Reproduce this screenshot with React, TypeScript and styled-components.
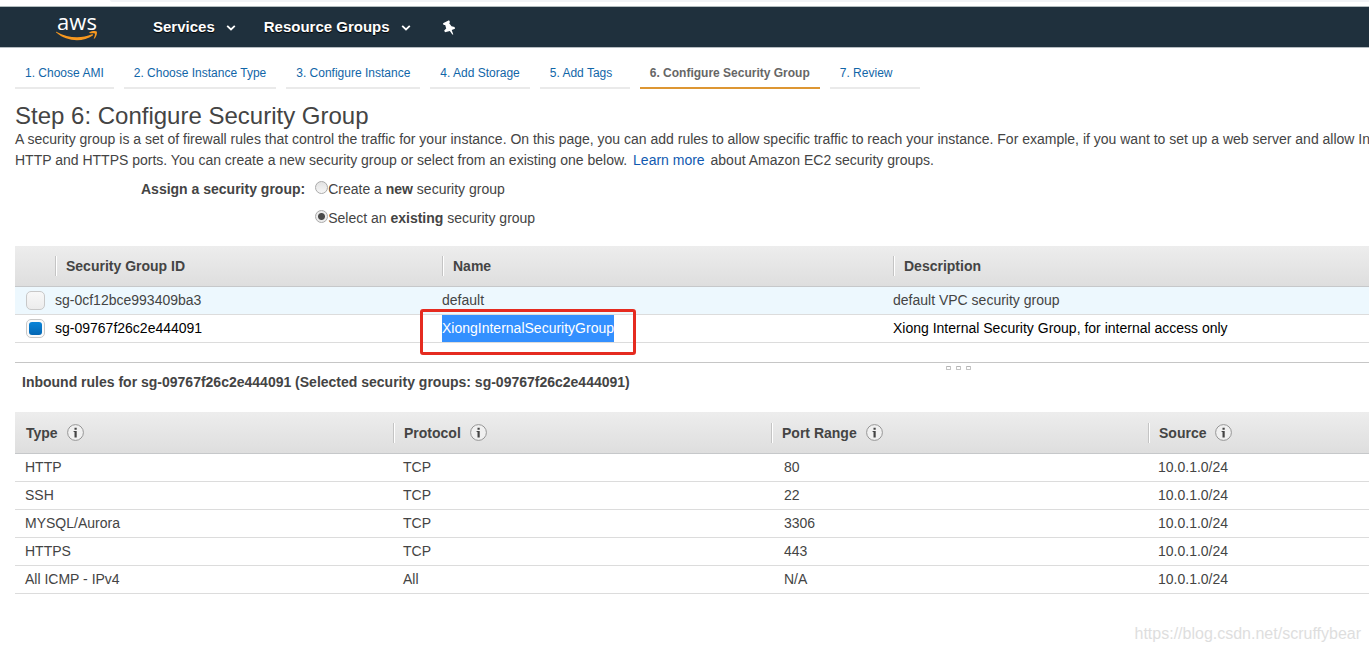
import React from "react";
import styled, { createGlobalStyle } from "styled-components";

const GlobalStyle = createGlobalStyle`
  *, *::before, *::after { box-sizing: border-box; }
  body {
    margin: 0;
    background: #fff;
    color: #444;
    font: 14px/20px "Liberation Sans", Arial, sans-serif;
  }
`;

const Page = styled.div`
  overflow: hidden;
`;

const BrowserEdge = styled.div`
  height: 7px;
  padding-left: 110px;
  border-bottom: 1px solid #b3bdbf;
  &::before {
    content: "";
    display: block;
    height: 2px;
    border-radius: 0 0 0 4px;
    background: #f1f3f6;
  }
`;

const NavBar = styled.header`
  display: flex;
  align-items: center;
  height: 41px;
  padding-left: 56px;
  background: #1f303d;
  border-bottom: 1px solid #b5bcc1;
`;

const Logo = styled.a`
  display: flex;
  flex-direction: column;
  align-items: center;
  width: 42px;
  margin-right: 55px;
  color: #fff;
  text-decoration: none;
  font: 22px/16px "Open Sans", "Noto Sans", sans-serif;
  svg { display: block; }
`;

const LogoWord = styled.span`
  height: 18px;
`;

const NavItem = styled.button`
  display: flex;
  align-items: center;
  gap: 11px;
  margin: 0 28px 0 0;
  padding: 0;
  border: 0;
  background: none;
  color: #fff;
  font: bold 15px/20px "Liberation Sans", Arial, sans-serif;
  text-shadow: 0 1px 1px #000;
  svg { display: block; }
`;

const Steps = styled.nav`
  display: flex;
  gap: 10px;
  padding: 16px 15px 0;
`;

const Step = styled.a<{ $active?: boolean }>`
  min-width: 90px;
  padding: 0 10px 5px;
  border-bottom: 2px solid ${(p) => (p.$active ? "#dd9632" : "#eaeaea")};
  color: ${(p) => (p.$active ? "#666" : "#1166a8")};
  font-size: 12px;
  line-height: 18px;
  font-weight: ${(p) => (p.$active ? "bold" : "normal")};
  text-decoration: none;
  white-space: nowrap;
`;

const Content = styled.main`
  padding-left: 15px;
`;

const Title = styled.h1`
  margin: 14px 0 0;
  font-size: 24px;
  line-height: 26px;
  font-weight: normal;
`;

const Intro = styled.p`
  margin: 0;
  line-height: 21px;
  white-space: nowrap;
`;

const TextLink = styled.a`
  margin: 0 2px;
  color: #1159b0;
  text-decoration: none;
`;

const Assign = styled.div`
  display: flex;
  gap: 10px;
  margin: 8px 0 18px;
  padding-left: 126px;
`;

const AssignLabel = styled.span`
  font-weight: bold;
`;

const Options = styled.div`
  display: flex;
  flex-direction: column;
  gap: 9px;
`;

const Option = styled.label`
  display: flex;
  white-space: pre;
`;

const Radio = styled.input`
  appearance: none;
  width: 13px;
  height: 13px;
  margin: 2px 0 0;
  border: 1px solid #aaa;
  border-radius: 50%;
  background: linear-gradient(#e2e2e2, #f6f6f6);
  &:checked {
    background: radial-gradient(circle, #4a4a4a 0 3px, #ececec 4px);
  }
`;

const Table = styled.table`
  width: 100%;
  table-layout: fixed;
  border-collapse: separate;
  border-spacing: 0;
`;

const Col = styled.col<{ $w?: number }>`
  width: ${(p) => (p.$w ? `${p.$w}px` : "auto")};
`;

const HeadCell = styled.th<{ $tall?: boolean }>`
  height: ${(p) => (p.$tall ? 42 : 41)}px;
  padding: 0;
  text-align: left;
  background: linear-gradient(#ededed, #dedede);
  border-bottom: 1px solid #c6c8ca;
`;

const HeadLabel = styled.span<{ $divided?: boolean }>`
  display: flex;
  align-items: center;
  gap: 9px;
  height: 20px;
  padding-left: 11px;
  box-shadow: ${(p) => (p.$divided ? "inset 1px 0 #c4c4c4, inset 2px 0 #fff" : "none")};
`;

const Row = styled.tr<{ $tint?: boolean; $strong?: boolean }>`
  background: ${(p) => (p.$tint ? "#edf8fe" : "#fff")};
  color: ${(p) => (p.$strong ? "#000" : "#444")};
`;

const Cell = styled.td<{ $pad?: number }>`
  position: relative;
  height: 28px;
  padding: 0 0 0 ${(p) => p.$pad ?? 0}px;
  border-bottom: 1px solid #dcdcdc;
  line-height: 27px;
`;

const CheckBox = styled.input`
  appearance: none;
  display: block;
  width: 19px;
  height: 19px;
  margin: 0 0 0 11px;
  border: 1px solid #c8c8c8;
  border-radius: 5px;
  background: linear-gradient(#f8f8f8, #ececec);
  &:checked {
    display: grid;
    place-items: center;
    background: #fafafa;
  }
  &:checked::before {
    content: "";
    width: 13px;
    height: 13px;
    border-radius: 3px;
    background: linear-gradient(#0a84d8, #0467b4);
  }
`;

const Selected = styled.span`
  display: inline-block;
  background: #3390ff;
  color: #fff;
`;

const RedFrame = styled.span`
  position: absolute;
  top: -6px;
  left: -22px;
  z-index: 1;
  width: 216px;
  height: 46px;
  border: 3px solid #e52b20;
  border-radius: 3px;
`;

const Splitter = styled.div`
  display: flex;
  justify-content: center;
  gap: 5px;
  margin-top: 19px;
  padding: 3px 0 0 532px;
  border-top: 1px solid #c6c6c6;
`;

const Grip = styled.i`
  width: 5px;
  height: 4px;
  border: 1px solid #c4c4c4;
  border-top-color: #b4b4b4;
  border-radius: 1px;
`;

const RulesTitle = styled.h2`
  margin: 2px 0 20px;
  padding-left: 7px;
  font-size: 14px;
  line-height: 20px;
`;

const Watermark = styled.footer`
  padding: 30px 8px 8px;
  color: #dedede;
  font-size: 16px;
  line-height: 20px;
  text-align: right;
`;

const Chevron = () => (
  <svg width="10" height="7" viewBox="0 0 10 7" aria-hidden="true">
    <path d="M1.200 1.800 5 5.500l3.800-3.700" fill="none" stroke="#fff" strokeWidth="1.800" />
  </svg>
);

const Info = () => (
  <svg width="17" height="17" viewBox="0 0 17 17" aria-hidden="true">
    <circle cx="8.500" cy="8.500" r="7.900" fill="#f0f0f0" stroke="#8c8c8c" strokeWidth=".9" />
    <path d="M7.500 3.800h2.200v1.900H7.500zM6.600 6.900h3.100v6.500H7.500V8h-.9z" fill="#444" />
  </svg>
);

const steps = [
  "1. Choose AMI",
  "2. Choose Instance Type",
  "3. Configure Instance",
  "4. Add Storage",
  "5. Add Tags",
  "6. Configure Security Group",
  "7. Review",
];

const rules = [
  ["HTTP", "TCP", "80", "10.0.1.0/24"],
  ["SSH", "TCP", "22", "10.0.1.0/24"],
  ["MYSQL/Aurora", "TCP", "3306", "10.0.1.0/24"],
  ["HTTPS", "TCP", "443", "10.0.1.0/24"],
  ["All ICMP - IPv4", "All", "N/A", "10.0.1.0/24"],
];

const PORT_COLUMN = 2;

export default function App() {
  return (
    <Page>
      <GlobalStyle />
      <BrowserEdge />
      <NavBar>
        <Logo href="#">
          <LogoWord>aws</LogoWord>
          <svg width="42" height="11" viewBox="0 0 42 11" aria-hidden="true">
            <path d="M.4.800C12 7.300 25 8 36 3.300c1-.4 1.700.5.8 1.200C27 11.500 11 11 .2 1.600c-.4-.5-.2-1 .2-.8z" fill="#f7981f" />
            <path d="M33.500 1.300c2.300-1.500 6.500-1.500 7.300-.6.600 1-.3 5.200-2.500 7-.4.300-.7.100-.5-.3.700-1.800 1.500-4.200 1-4.800s-3.300-.4-4.900-.400c-.7 0-.8-.5-.4-.9z" fill="#f7981f" />
          </svg>
        </Logo>
        <NavItem type="button">Services <Chevron /></NavItem>
        <NavItem type="button">Resource Groups <Chevron /></NavItem>
        <NavItem type="button" aria-label="Pin shortcuts">
          <svg width="17" height="15" viewBox="-3 0 17 15" aria-hidden="true">
            <path d="M1 3.200 7 .3l1 1.700-.8 1.300 2.300 3L12.600 7l.4 1.700-3.300 1.400L11.300 14.500h-1L7.900 11 3 12.200l-.8-1.700 2-2.100L3.200 5 1.600 4.900z" fill="#fff" />
          </svg>
        </NavItem>
      </NavBar>
      <Steps aria-label="Wizard steps">
        {steps.map((s, i) => (
          <Step key={s} href="#" $active={i === 5}>{s}</Step>
        ))}
      </Steps>
      <Content>
        <Title>Step 6: Configure Security Group</Title>
        <Intro>
          A security group is a set of firewall rules that control the traffic for your instance. On this page, you can add rules to allow specific traffic to reach your instance. For example, if you want to set up a web server and allow Internet
          <br />
          HTTP and HTTPS ports. You can create a new security group or select from an existing one below. <TextLink href="#">Learn more</TextLink> about Amazon EC2 security groups.
        </Intro>
        <Assign role="radiogroup" aria-labelledby="assign">
          <AssignLabel id="assign">Assign a security group:</AssignLabel>
          <Options>
            <Option><Radio type="radio" name="group" />Create a <b>new</b> security group</Option>
            <Option><Radio type="radio" name="group" defaultChecked />Select an <b>existing</b> security group</Option>
          </Options>
        </Assign>
        <Table>
          <colgroup><Col $w={40} /><Col $w={387} /><Col $w={451} /><Col /></colgroup>
          <thead>
            <tr>
              <HeadCell />
              {["Security Group ID", "Name", "Description"].map((h) => (
                <HeadCell key={h} scope="col"><HeadLabel $divided>{h}</HeadLabel></HeadCell>
              ))}
            </tr>
          </thead>
          <tbody>
            <Row $tint>
              <Cell><CheckBox type="checkbox" aria-label="Select sg-0cf12bce993409ba3" /></Cell>
              <Cell>sg-0cf12bce993409ba3</Cell>
              <Cell>default</Cell>
              <Cell>default VPC security group</Cell>
            </Row>
            <Row $strong>
              <Cell><CheckBox type="checkbox" defaultChecked aria-label="Select sg-09767f26c2e444091" /></Cell>
              <Cell>sg-09767f26c2e444091</Cell>
              <Cell><Selected>XiongInternalSecurityGroup</Selected><RedFrame /></Cell>
              <Cell>Xiong Internal Security Group, for internal access only</Cell>
            </Row>
          </tbody>
        </Table>
        <Splitter><Grip /><Grip /><Grip /></Splitter>
        <RulesTitle>Inbound rules for sg-09767f26c2e444091 (Selected security groups: sg-09767f26c2e444091)</RulesTitle>
        <Table>
          <colgroup><Col $w={378} /><Col $w={378} /><Col $w={377} /><Col /></colgroup>
          <thead>
            <tr>
              {["Type", "Protocol", "Port Range", "Source"].map((h, i) => (
                <HeadCell key={h} scope="col" $tall>
                  <HeadLabel $divided={i > 0}>{h}<Info /></HeadLabel>
                </HeadCell>
              ))}
            </tr>
          </thead>
          <tbody>
            {rules.map((r) => (
              <Row key={r[0]}>
                {r.map((c, i) => <Cell key={i} $pad={i === PORT_COLUMN ? 13 : 10}>{c}</Cell>)}
              </Row>
            ))}
          </tbody>
        </Table>
      </Content>
      <Watermark>https://blog.csdn.net/scruffybear</Watermark>
    </Page>
  );
}
